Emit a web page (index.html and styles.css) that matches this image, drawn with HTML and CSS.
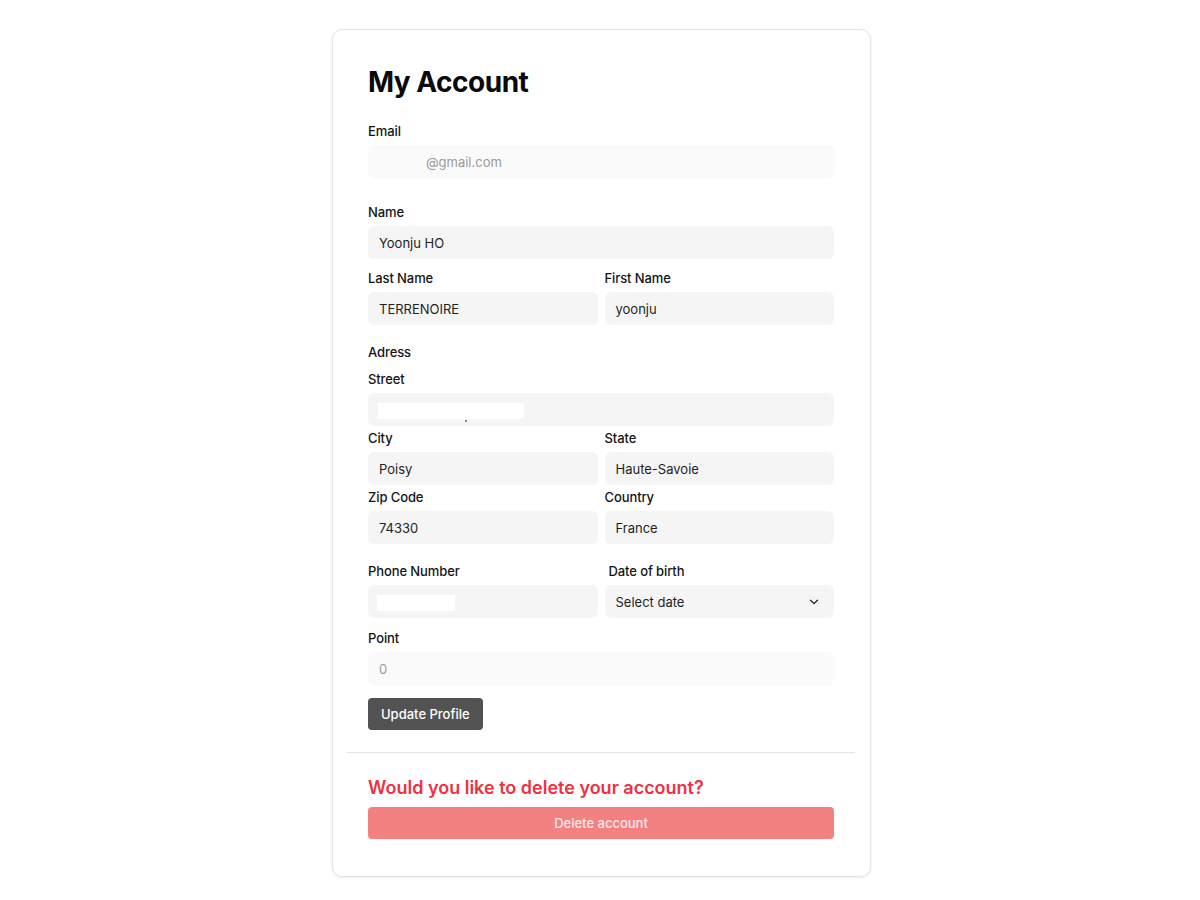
FILE: index.html
```html
<!DOCTYPE html>
<html lang="en">
<head>
<meta charset="utf-8">
<title>My Account</title>
<link rel="stylesheet" href="styles.css">
</head>
<body>
<div class="page">
  <div class="card">
    <h1 class="title">My Account</h1>

    <div class="field f-email">
      <div class="label">Email</div>
      <div class="input disabled"><span class="mask-blank"></span>@gmail.com</div>
    </div>

    <div class="field f-name">
      <div class="label">Name</div>
      <div class="input">Yoonju HO</div>
    </div>

    <div class="row f-split">
      <div class="field">
        <div class="label">Last Name</div>
        <div class="input">TERRENOIRE</div>
      </div>
      <div class="field">
        <div class="label">First Name</div>
        <div class="input">yoonju</div>
      </div>
    </div>

    <div class="label section f-adress">Adress</div>

    <div class="field f-street">
      <div class="label">Street</div>
      <div class="input"><span class="mask street-mask"><span class="desc"></span></span></div>
    </div>

    <div class="row f-city">
      <div class="field">
        <div class="label">City</div>
        <div class="input">Poisy</div>
      </div>
      <div class="field">
        <div class="label">State</div>
        <div class="input">Haute-Savoie</div>
      </div>
    </div>

    <div class="row f-zip">
      <div class="field">
        <div class="label">Zip Code</div>
        <div class="input">74330</div>
      </div>
      <div class="field">
        <div class="label">Country</div>
        <div class="input">France</div>
      </div>
    </div>

    <div class="row f-phone">
      <div class="field">
        <div class="label">Phone Number</div>
        <div class="input"><span class="mask phone-mask"></span></div>
      </div>
      <div class="field">
        <div class="label indent">Date of birth</div>
        <div class="input select">
          <span>Select date</span>
          <svg class="chev" width="10" height="6" viewBox="0 0 10 6" fill="none"><path d="M1.5 1.2 L5 4.6 L8.5 1.2" stroke="#222" stroke-width="1.3" stroke-linecap="round" stroke-linejoin="round"/></svg>
        </div>
      </div>
    </div>

    <div class="field f-point">
      <div class="label">Point</div>
      <div class="input disabled">0</div>
    </div>

    <button class="btn-update">Update Profile</button>

    <hr class="divider">

    <h2 class="danger-title">Would you like to delete your account?</h2>
    <button class="btn-delete">Delete account</button>
  </div>
</div>
</body>
</html>
```

FILE: styles.css
```css
* { box-sizing: border-box; }

html, body {
  margin: 0;
  padding: 0;
  background: #ffffff;
}

body {
  font-family: Inter, "Noto Sans", "Liberation Sans", sans-serif;
  color: #111111;
}

.page {
  display: flex;
  justify-content: center;
  padding-top: 29px;
  padding-bottom: 24px;
}

.card {
  width: 539px;
  margin-left: 3px;
  border: 1px solid #e4e4e4;
  border-radius: 10px;
  box-shadow: 0 1px 3px rgba(0, 0, 0, 0.08);
  padding: 35px 36px 37px 35px;
  background: #fff;
}

.title {
  margin: 0;
  font-size: 28px;
  line-height: 34px;
  font-weight: 700;
  color: #0a0a0a;
  letter-spacing: -0.5px;
}

.label {
  font-size: 13px;
  line-height: 16px;
  font-weight: 500;
  color: #141414;
  margin-bottom: 6px;
  letter-spacing: -0.1px;
}

.label.indent { padding-left: 4px; }

.label.section { margin-bottom: 11px; }

.input {
  height: 33px;
  border-radius: 6px;
  background: #f5f5f5;
  padding: 0 11px;
  display: flex;
  align-items: center;
  font-size: 13px;
  color: #1f1f1f;
  white-space: nowrap;
}

.input.disabled {
  background: #fafafa;
  color: #9a9a9a;
}

.input.select {
  justify-content: space-between;
  padding-right: 15px;
}

.mask-blank {
  display: inline-block;
  width: 47px;
}

.mask {
  display: inline-block;
  background: #ffffff;
  position: relative;
}

.street-mask {
  width: 146px;
  height: 16px;
  margin-top: 2px;
  margin-left: -1px;
}

.street-mask .desc {
  position: absolute;
  left: 87px;
  bottom: -3px;
  width: 2px;
  height: 2px;
  background: #666;
  border-radius: 1px;
}

.phone-mask {
  width: 78px;
  height: 16px;
  margin-top: 2px;
  margin-left: -2px;
}

.row {
  display: grid;
  grid-template-columns: 1fr 1fr;
  column-gap: 7px;
}

.f-email { margin-top: 24px; }
.f-name { margin-top: 26px; }
.f-split { margin-top: 11px; }
.f-adress { margin-top: 19px; }
.f-street { margin-top: 0; }
.f-city { margin-top: 4px; }
.f-zip { margin-top: 4px; }
.f-phone { margin-top: 19px; }
.f-point { margin-top: 12px; }

.btn-update {
  display: block;
  margin-top: 13px;
  height: 32px;
  padding: 0 13px;
  border: none;
  border-radius: 4px;
  background: #525252;
  color: #ffffff;
  font-family: inherit;
  font-size: 13px;
  font-weight: 500;
}

.divider {
  border: none;
  border-top: 1px solid #e2e2e2;
  margin: 22px -21px 0 -21px;
  height: 0;
}

.danger-title {
  margin: 24px 0 0 0;
  font-size: 18px;
  line-height: 22px;
  font-weight: 600;
  color: #f1303f;
}

.btn-delete {
  display: block;
  width: 100%;
  margin-top: 8px;
  height: 32px;
  border: none;
  border-radius: 4px;
  background: #f48181;
  color: #fde9e9;
  font-family: inherit;
  font-size: 13px;
  font-weight: 500;
}
```
